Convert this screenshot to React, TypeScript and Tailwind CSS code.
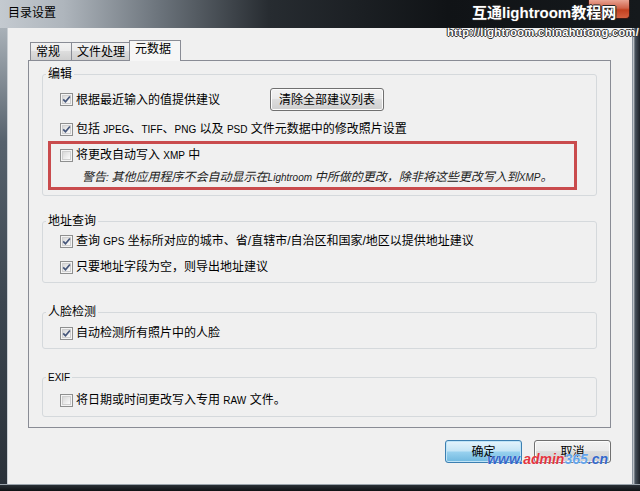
import { clsx } from 'clsx'
import { ReactNode } from 'react'

// ─── CheckBox ─────────────────────────────────────────────────────────────────
function CheckBox({ checked = false }: { checked?: boolean }) {
  return (
    <span className="relative flex h-[13px] w-[13px] shrink-0 items-center justify-center border border-[#8e8f8f] bg-[#f4f4f4]">
      <span className="h-[9px] w-[9px] border border-[#cfcfcf] bg-[linear-gradient(135deg,#d8d8d8,#fbfbfb)]" />
      {checked && (
        <svg viewBox="0 0 13 13" className="absolute -left-px -top-px h-[13px] w-[13px]">
          <path d="M3.2 6.3 5.5 8.8 9.9 3.5" fill="none" stroke="#45567a" strokeWidth="1.7" />
        </svg>
      )}
    </span>
  )
}

// latin words inside chinese text come out narrower in the original
function L({ children }: { children: ReactNode }) {
  return <span className="text-[10px]">{children}</span>
}

// ─── Row ──────────────────────────────────────────────────────────────────────
function Row({ checked, children, className }: { checked?: boolean; children: ReactNode; className?: string }) {
  return (
    <div className={clsx('flex h-4 items-center gap-[3px]', className)}>
      <CheckBox checked={checked} />
      <span className="whitespace-nowrap leading-4">{children}</span>
    </div>
  )
}

// ─── Group ────────────────────────────────────────────────────────────────────
function Group({ title, className, children }: { title: ReactNode; className?: string; children: ReactNode }) {
  return (
    <fieldset className={clsx('min-w-0 rounded-[3px] border border-[#d5d9dc] px-[5px]', className)}>
      <legend className="-ml-[2px] px-[2px] text-[12px] leading-[14px]">{title}</legend>
      {children}
    </fieldset>
  )
}

// ─── Tab ──────────────────────────────────────────────────────────────────────
function Tab({ active, className, children }: { active?: boolean; className?: string; children: ReactNode }) {
  return (
    <div
      className={clsx(
        'border-x border-t border-[#898c95] pl-[5px] whitespace-nowrap',
        active
          ? 'relative z-10 -mb-px h-[21px] bg-[#f6f6f6] leading-[17px]'
          : 'h-[18px] bg-[linear-gradient(180deg,#f2f2f2_0%,#ebebeb_45%,#dddddd_50%,#cfcfcf_100%)] leading-[18px]',
        className
      )}
    >
      {children}
    </div>
  )
}

// ─── WinButton ────────────────────────────────────────────────────────────────
function WinButton({ primary, className, children }: { primary?: boolean; className?: string; children: ReactNode }) {
  return (
    <button
      className={clsx(
        'h-[23px] rounded-[3px] border text-[12px] leading-none text-black',
        primary
          ? 'border-[#3c7fb1] bg-[linear-gradient(180deg,#e5f4fc_0%,#c4e5f6_48%,#98d1ef_52%,#6fb8df_100%)] shadow-[inset_0_0_0_1px_#bfe4f7]'
          : 'border-[#707070] bg-[linear-gradient(180deg,#f2f2f2_0%,#ebebeb_45%,#dddddd_50%,#cfcfcf_100%)] shadow-[inset_0_0_0_1px_#fcfcfc]',
        className
      )}
    >
      {children}
    </button>
  )
}

export default function App() {
  return (
    <div className="relative flex h-[491px] w-[640px] flex-col overflow-hidden bg-[#1c2127] font-['Liberation_Sans','Noto_Sans_CJK_SC',sans-serif] text-[12px] text-black">
      {/* title bar */}
      <div className="flex h-[28px] shrink-0 items-start justify-between bg-[linear-gradient(90deg,#c4cad0_0%,#aeb5bc_10%,#6b737b_25%,#272c31_42%,#101316_70%,#15191c_100%)]">
        <span className="pl-[8px] pt-[5px] leading-[16px]">目录设置</span>
        <div className="mr-[10px] h-[19px] w-[42px] rounded-b-[4px] border border-t-0 border-[#3b1a14] bg-[linear-gradient(180deg,#e9a392_0%,#d0634a_45%,#c2401f_55%,#d5603f_100%)]" />
      </div>

      <div className="flex min-h-0 flex-1">
        <div className="w-[7px] shrink-0 bg-[linear-gradient(180deg,#a9b1b8_0%,#56616c_25%,#3c4650_60%,#2a3139_100%)]" />

        {/* client */}
        <div className="flex min-w-0 flex-1 flex-col border-l border-[#c9ced3] bg-[#f0f0f0] pl-[20px] pr-[21px] pt-[12px]">
          <div className="flex h-[20px] items-end pl-[2px]">
            <Tab className="w-[42px] pl-[3px]">常规</Tab>
            <Tab className="-ml-px w-[59px]">文件处理</Tab>
            <Tab active className="-ml-px w-[52px]">元数据</Tab>
          </div>

          <div className="border border-[#898c95] bg-[#f0f0f0] px-[13px] pb-[10px] pt-[6px]">
            <Group title="编辑" className="pb-[5px]">
              <div className="mt-[7px] flex h-[23px] items-center pl-[12px]">
                <Row checked className="w-[210px]">根据最近输入的值提供建议</Row>
                <WinButton className="w-[114px]">清除全部建议列表</WinButton>
              </div>
              <Row checked className="mt-[10px] pl-[12px]">
                包括 <L>JPEG</L>、<L>TIFF</L>、<L>PNG</L> 以及 <L>PSD</L> 文件元数据中的修改照片设置
              </Row>
              <div className="mt-[4px] mr-[14px] h-[49px] border-[3px] border-[#c94b4d] pl-[9px] pt-[3px]">
                <Row>将更改自动写入 <L>XMP</L> 中</Row>
                <div className="mt-[6px] pl-[22px] leading-4 italic whitespace-nowrap text-[#222]">
                  警告<L>: </L>其他应用程序不会自动显示在<L>Lightroom </L>中所做的更改，除非将这些更改写入到<L>XMP</L>。
                </div>
              </div>
            </Group>

            <Group title="地址查询" className="mt-[18px] pb-[7px]">
              <Row checked className="mt-[5px] pl-[12px]">
                查询 <L>GPS</L> 坐标所对应的城市、省/直辖市/自治区和国家/地区以提供地址建议
              </Row>
              <Row checked className="mt-[10px] pl-[12px]">只要地址字段为空，则导出地址建议</Row>
            </Group>

            <Group title="人脸检测" className="mt-[22px] pb-[7px]">
              <Row checked className="mt-[6px] pl-[12px]">自动检测所有照片中的人脸</Row>
            </Group>

            <Group title={<L>EXIF</L>} className="mt-[21px] pb-[8px]">
              <Row className="mt-[7px] pl-[12px]">将日期或时间更改写入专用 <L>RAW</L> 文件。</Row>
            </Group>
          </div>

          <div className="relative mt-[12px] flex justify-end gap-[12px]">
            <WinButton primary className="w-[77px]">确定</WinButton>
            <WinButton className="w-[77px]">取消</WinButton>
            <span className="absolute right-[3px] top-[12px] text-[14px] font-bold italic leading-[15px] [text-shadow:0_0_1px_#fff]">
              <span className="text-[#3467c9]">www.</span>
              <span className="text-[#e2353f]">admin</span>
              <span className="text-[#63a4ea]">365</span>
              <span className="text-[#3467c9]">.cn</span>
            </span>
          </div>
        </div>

        <div className="w-[8px] shrink-0 border-l border-[#8d969f] bg-[linear-gradient(90deg,#dfe3e6_0%,#48525c_30%,#1d2228_100%)]" />
      </div>

      <div className="h-[7px] shrink-0 border-t border-[#9aa3ab] bg-[linear-gradient(180deg,#2a3036,#0f1215)]" />

      {/* watermark */}
      <div className="absolute left-[472px] top-[4px] text-[15px] font-bold leading-[18px] text-white [text-shadow:1px_0_#222,-1px_0_#222,0_1px_#222,0_-1px_#222]">
        互通lightroom教程网
      </div>
      <div className="absolute left-[447px] top-[26px] text-[11px] font-bold leading-[13px] tracking-[0.4px] text-white [text-shadow:1px_0_#333,-1px_0_#333,0_1px_#333,0_-1px_#333]">
        http://lightroom.chinahutong.com/
      </div>
    </div>
  )
}
